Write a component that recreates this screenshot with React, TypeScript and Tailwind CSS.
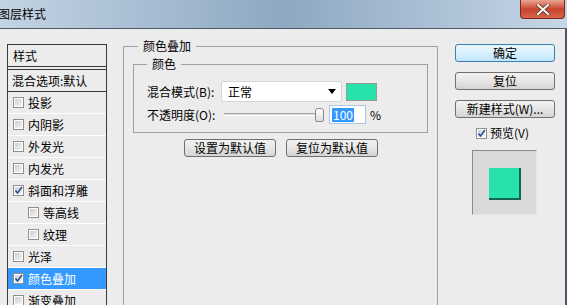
import React from "react";

const font = { fontFamily: '"Noto Sans CJK SC", "Liberation Sans", sans-serif' };

const styleItems = [
  { label: "投影", checked: false, indent: false },
  { label: "内阴影", checked: false, indent: false },
  { label: "外发光", checked: false, indent: false },
  { label: "内发光", checked: false, indent: false },
  { label: "斜面和浮雕", checked: true, indent: false },
  { label: "等高线", checked: false, indent: true },
  { label: "纹理", checked: false, indent: true },
  { label: "光泽", checked: false, indent: false },
  { label: "颜色叠加", checked: true, indent: false, active: true },
  { label: "渐变叠加", checked: false, indent: false },
];

const CheckBox = ({ checked }: { checked: boolean }) => (
  <span className="flex h-[11px] w-[11px] shrink-0 items-center justify-center border border-[#8e8f8f] bg-white">
    <span className="flex h-[9px] w-[9px] items-center justify-center border border-white bg-gradient-to-br from-[#cfcfcf] to-[#f4f4f4]">
      {checked && (
        <svg width="9" height="9" viewBox="0 0 9 9" className="overflow-visible">
          <path d="M1.5 4.5 L3.5 7 L8 1" fill="none" stroke="#2a4f9a" strokeWidth="1.6" />
        </svg>
      )}
    </span>
  </span>
);

const WinButton = ({ text, primary, className }: { text: string; primary?: boolean; className?: string }) => (
  <div
    className={`flex h-[18px] items-center justify-center rounded-[3px] border text-[12px] leading-none text-black ${
      primary
        ? "border-[#3c7fb1] bg-gradient-to-b from-[#eaf6fd] via-[#d9f0fc] to-[#bee6fd]"
        : "border-[#707070] bg-gradient-to-b from-[#f2f2f2] via-[#e6e6e6] to-[#d4d4d4]"
    } ${className ?? ""}`}
  >
    {text}
  </div>
);

export default function App() {
  return (
    <div className="relative h-[305px] w-[567px] overflow-hidden bg-[#ececec] text-black" style={font}>
      {/* title bar */}
      <div className="flex h-[29px] items-start justify-between border-b border-[#4f5c69] bg-gradient-to-r from-[#c3d4e3] via-[#8ea8c1] to-[#c6d6e6]">
        <div className="flex h-[27px] items-center pl-0 text-[12px] leading-none -ml-[2px]">图层样式</div>
        <div className="mr-[2px] flex h-[19px] w-[45px] items-center justify-center rounded-b-[4px] border border-t-0 border-[#7a2a1f] bg-gradient-to-b from-[#e9a594] via-[#c8432d] to-[#d7644c]">
          <svg width="14" height="11" viewBox="0 0 14 11">
            <path d="M2 1 L12 10 M12 1 L2 10" stroke="#5a2a22" strokeWidth="3.6" strokeLinecap="square" />
            <path d="M2 1 L12 10 M12 1 L2 10" stroke="#f4f4f4" strokeWidth="2.2" strokeLinecap="square" />
          </svg>
        </div>
      </div>

      {/* body */}
      <div className="flex h-[276px] border-r-2 border-[#4a5866]">
        {/* styles list */}
        <div className="ml-[7px] mt-[15px] w-[100px] border-x border-t border-[#3a3a3a] text-[12px] leading-none">
          <div className="flex h-[22px] items-center border-b border-[#3a3a3a] pl-[5px]">样式</div>
          <div className="flex h-[25px] items-center border-y-0 border-t-[2px] border-[#ececec]">
            <div className="flex h-[23px] w-full items-center border-t border-b border-[#3a3a3a] pl-[4px]">混合选项:默认</div>
          </div>
          {styleItems.map((item) => (
            <div
              key={item.label}
              className={`flex h-[22px] items-center gap-[4px] border-b border-white ${
                item.indent ? "pl-[20px]" : "pl-[5px]"
              } ${item.active ? "bg-[#3399ff] text-white" : ""}`}
            >
              <CheckBox checked={item.checked} />
              <span>{item.label}</span>
            </div>
          ))}
        </div>

        {/* color overlay group */}
        <div className="relative ml-[16px] mt-[17px] h-[300px] w-[315px] border border-[#a0a0a0] text-[12px] leading-none">
          <span className="absolute -top-[7px] left-[14px] bg-[#ececec] px-[5px]">颜色叠加</span>

          <div className="relative ml-[9px] mt-[17px] h-[69px] w-[295px] border border-[#a0a0a0]">
            <span className="absolute -top-[7px] left-[13px] bg-[#ececec] px-[5px]">颜色</span>

            <div className="ml-[13px] mt-[16px] flex items-center">
              <span className="w-[74px]">混合模式(B):</span>
              <div className="flex h-[21px] w-[121px] items-center justify-between rounded-[2px] border border-[#d6d6d6] bg-white pl-[6px] pr-[5px]">
                <span>正常</span>
                <svg width="8" height="5" viewBox="0 0 8 5">
                  <path d="M0 0 L8 0 L4 5 Z" fill="#000" />
                </svg>
              </div>
              <div className="ml-[4px] h-[18px] w-[31px] border border-[#999] bg-[#27e2ab]" />
            </div>

            <div className="ml-[13px] mt-[3px] flex items-center">
              <span className="w-[74px]">不透明度(O):</span>
              <div className="relative flex h-[18px] w-[108px] items-center">
                <div className="ml-[3px] h-[3px] w-[96px] border-t border-[#a8a8a8] border-b border-b-white bg-[#d6d6d6]" />
                <div className="absolute left-[94px] top-[2px] h-[14px] w-[9px] rounded-t-[3px] rounded-b-[2px] border border-[#8a8a8a] bg-gradient-to-b from-white to-[#dcdcdc]" />
              </div>
              <div className="flex h-[19px] w-[37px] items-center border border-[#a9c6e3] bg-white pl-[2px]">
                <span className="bg-[#3399ff] px-[1px] py-[1px] text-white">100</span>
              </div>
              <span className="ml-[4px]">%</span>
            </div>
          </div>

          <div className="mt-[6px] flex gap-[10px] pl-[60px]">
            <WinButton text="设置为默认值" className="w-[92px]" />
            <WinButton text="复位为默认值" className="w-[92px]" />
          </div>
        </div>

        {/* right column */}
        <div className="ml-[17px] mt-[15px] flex w-[100px] flex-col text-[12px] leading-none">
          <WinButton text="确定" primary />
          <WinButton text="复位" className="mt-[10px]" />
          <WinButton text="新建样式(W)..." className="mt-[10px]" />
          <div className="mt-[9px] flex items-center gap-[3px] pl-[21px]">
            <CheckBox checked />
            <span>预览(V)</span>
          </div>
          <div className="ml-[17px] mt-[11px] h-[65px] w-[65px] border-l border-t border-[#8a8a8a] border-b border-r border-b-[#e6e6e6] border-r-[#e6e6e6] bg-[#d9d9d9] pl-[16px] pt-[17px]">
            <div className="h-[32px] w-[32px] border-b-2 border-r-2 border-[#14664c] bg-[#27e2ab]" />
          </div>
        </div>
      </div>
    </div>
  );
}
